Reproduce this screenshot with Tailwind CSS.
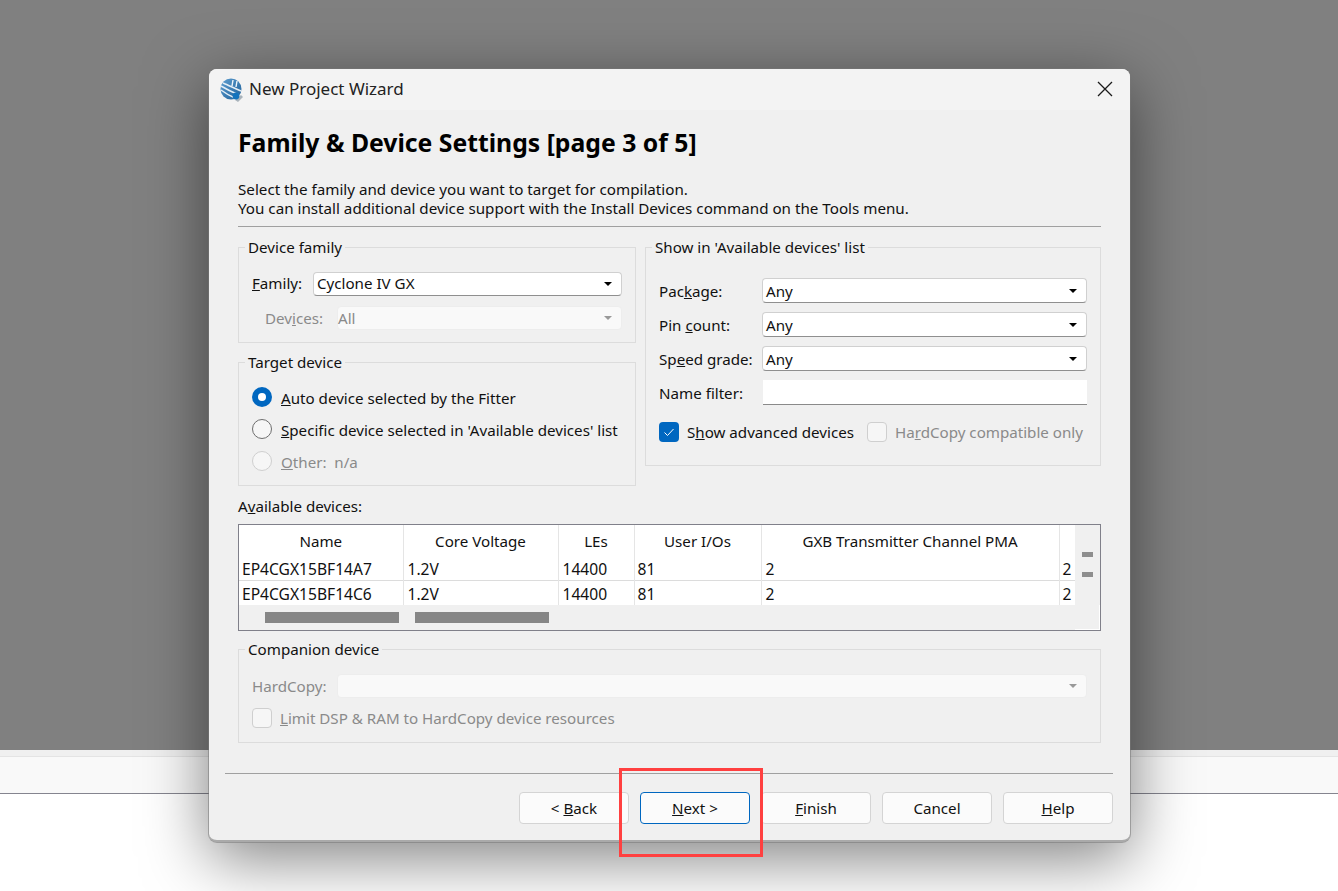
<!DOCTYPE html>
<html lang="en">
<head>
  <meta charset="UTF-8" />
  <title>New Project Wizard</title>
  <script src="https://cdn.jsdelivr.net/npm/@tailwindcss/browser@4"></script>
</head>
<body class="relative w-[1338px] h-[891px] overflow-hidden bg-white font-['Noto_Sans',sans-serif] text-[15.15px] leading-[20px] text-[#111]">

  <!-- dimmed main window behind the dialog -->
  <div class="h-[750px] bg-[#808080]"></div>
  <div class="h-[7px] bg-[#f0f0f0] border-b border-[#e4e4e4]"></div>
  <div class="h-[37px] bg-[#f9f9f9] border-b border-[#85858f]"></div>

  <!-- dialog -->
  <div class="absolute left-[209px] top-[69px] w-[921px] h-[773px] rounded-[8px] bg-[#f0f0f0] border-b-2 border-[#aaaaaa] shadow-[0_0_0_1px_rgba(120,120,120,0.55),0_16px_64px_rgba(0,0,0,0.5)]">

    <!-- title bar -->
    <div class="h-[41px] flex items-center pl-[11px] pr-[17px] rounded-t-[8px] bg-[#f3f3f3]">
      <svg class="w-[23px] h-[24px] mr-[6px]" viewBox="0 0 23 24">
        <defs>
          <linearGradient id="globe" x1="0" y1="0" x2="1" y2="1">
            <stop offset="0" stop-color="#5f9fd0" />
            <stop offset="1" stop-color="#1d5f99" />
          </linearGradient>
        </defs>
        <circle cx="11" cy="11" r="10.5" fill="url(#globe)" />
        <path d="M1 8 C6 11 12 14 19 17 M1 12 C5 15 10 18 15 20 M3 5 C8 7 14 10 21 13" stroke="#e4eef6" stroke-width="1.5" fill="none" />
        <path d="M13 2 L12 8 M17 3 L16 9" stroke="#eef5fa" stroke-width="1.4" />
        <path d="M15 22 L21 17 L23 19 L18 24 Z" fill="#a9b3bb" />
        <circle cx="16" cy="18" r="3.4" fill="#1273bd" />
      </svg>
      <span class="pb-[2px] text-[17px] text-[#222]">New Project Wizard</span>
      <svg class="ml-auto mb-[2px] w-[16px] h-[16px]" viewBox="0 0 16 16">
        <path d="M1 1 L15 15 M15 1 L1 15" stroke="#1a1a1a" stroke-width="1.3" fill="none" />
      </svg>
    </div>

    <div class="px-[29px]">
      <h1 class="mt-[17px] text-[24.75px] leading-[32px] font-bold text-black">Family &amp; Device Settings [page 3 of 5]</h1>
      <p class="mt-[21px] text-[15.2px] leading-[19px]">Select the family and device you want to target for compilation.<br />You can install additional device support with the Install Devices command on the Tools menu.</p>
      <div class="mt-[8px] h-px bg-[#a0a0a0]"></div>

      <div class="mt-[10px] flex gap-[9px] items-start">
        <!-- left column -->
        <div class="w-[398px]">
          <fieldset class="border border-[#dcdcdc] px-[13px] pt-[15px] pb-[12px]">
            <legend class="ml-[-7px] px-[3px]">Device family</legend>
            <div class="flex items-center h-[24px]">
              <span class="w-[61px] pb-[2px]"><span class="underline">F</span>amily:</span>
              <div class="flex-1 h-[24px] flex items-center pl-[3px] pr-[9px] rounded-[4px] bg-white border border-[#d0d0d0] border-b-[#8f8f8f]">
                <span class="pb-[2px]">Cyclone IV GX</span>
                <span class="ml-auto w-0 h-0 border-x-[4px] border-x-transparent border-t-[4px] border-t-black"></span>
              </div>
            </div>
            <div class="mt-[10px] flex items-center h-[24px] text-[#8a8a8a]">
              <span class="w-[85px] pl-[13px]">Dev<span class="underline">i</span>ces:</span>
              <div class="flex-1 h-[24px] flex items-center pr-[9px] rounded-[4px] bg-[#f9f9f9] border border-[#ededed]">
                <span>All</span>
                <span class="ml-auto w-0 h-0 border-x-[4px] border-x-transparent border-t-[4px] border-t-[#999]"></span>
              </div>
            </div>
          </fieldset>

          <fieldset class="mt-[9px] border border-[#dcdcdc] px-[13px] pt-[15px] pb-[14px]">
            <legend class="ml-[-7px] px-[3px]">Target device</legend>
            <div class="flex items-center h-[20px] gap-[9px]">
              <span class="w-[20px] h-[20px] rounded-full bg-[#0067c0] flex items-center justify-center"><span class="w-[8px] h-[8px] rounded-full bg-white"></span></span>
              <span class="pt-[2px]"><span class="underline">A</span>uto device selected by the Fitter</span>
            </div>
            <div class="mt-[12px] flex items-center h-[20px] gap-[9px]">
              <span class="w-[20px] h-[20px] rounded-full bg-[#f6f6f6] border border-[#6e6e6e]"></span>
              <span class="pt-[2px]"><span class="underline">S</span>pecific device selected in 'Available devices' list</span>
            </div>
            <div class="mt-[12px] flex items-center h-[20px] gap-[9px] text-[#8a8a8a]">
              <span class="w-[20px] h-[20px] rounded-full bg-[#f6f6f6] border border-[#cfcfcf]"></span>
              <span class="pt-[2px]"><span class="underline">O</span>ther:&nbsp; n/a</span>
            </div>
          </fieldset>
        </div>

        <!-- right column -->
        <fieldset class="w-[456px] border border-[#dcdcdc] pl-[13px] pr-[13px] pt-[21px] pb-[23px]">
          <legend class="ml-[-7px] px-[3px]">Show in 'Available devices' list</legend>
          <div class="flex items-center h-[25px]">
            <span class="w-[103px]">Pac<span class="underline">k</span>age:</span>
            <div class="flex-1 h-[25px] flex items-center pl-[3px] pr-[9px] rounded-[4px] bg-white border border-[#d0d0d0] border-b-[#8f8f8f]">
              <span>Any</span>
              <span class="ml-auto w-0 h-0 border-x-[4px] border-x-transparent border-t-[4px] border-t-black"></span>
            </div>
          </div>
          <div class="mt-[9px] flex items-center h-[25px]">
            <span class="w-[103px]">Pin <span class="underline">c</span>ount:</span>
            <div class="flex-1 h-[25px] flex items-center pl-[3px] pr-[9px] rounded-[4px] bg-white border border-[#d0d0d0] border-b-[#8f8f8f]">
              <span>Any</span>
              <span class="ml-auto w-0 h-0 border-x-[4px] border-x-transparent border-t-[4px] border-t-black"></span>
            </div>
          </div>
          <div class="mt-[9px] flex items-center h-[25px]">
            <span class="w-[103px]">Sp<span class="underline">e</span>ed grade:</span>
            <div class="flex-1 h-[25px] flex items-center pl-[3px] pr-[9px] rounded-[4px] bg-white border border-[#d0d0d0] border-b-[#8f8f8f]">
              <span>Any</span>
              <span class="ml-auto w-0 h-0 border-x-[4px] border-x-transparent border-t-[4px] border-t-black"></span>
            </div>
          </div>
          <div class="mt-[9px] flex items-center h-[25px]">
            <span class="w-[104px]">Name filter:</span>
            <div class="flex-1 h-[25px] bg-white border-b border-[#8a8a8a]"></div>
          </div>
          <div class="mt-[17px] flex items-center h-[20px]">
            <span class="w-[20px] h-[20px] rounded-[4px] bg-[#0067c0] flex items-center justify-center">
              <svg class="w-[12px] h-[12px]" viewBox="0 0 12 12"><path d="M1.5 6.5 L4.5 9.5 L10.5 3" stroke="#fff" stroke-width="1" fill="none" /></svg>
            </span>
            <span class="ml-[8px]">S<span class="underline">h</span>ow advanced devices</span>
            <span class="ml-[13px] w-[20px] h-[20px] rounded-[4px] bg-[#f6f6f6] border border-[#cfcfcf]"></span>
            <span class="ml-[8px] text-[#8a8a8a]">Ha<span class="underline">r</span>dCopy compatible only</span>
          </div>
        </fieldset>
      </div>

      <div class="mt-[10px]">A<span class="underline">v</span>ailable devices:</div>

      <!-- device table -->
      <div class="mt-[8px] h-[107px] flex border border-[#80808a] bg-[#f0f0f0]">
        <div class="w-[836px]">
          <table class="w-[836px] table-fixed bg-white">
            <colgroup>
              <col class="w-[164px]" /><col class="w-[155px]" /><col class="w-[76px]" /><col class="w-[127px]" /><col class="w-[298px]" /><col class="w-[16px]" />
            </colgroup>
            <thead>
              <tr class="h-[32px] text-center">
                <th class="font-normal border-r border-[#e5e5e5]">Name</th>
                <th class="font-normal border-r border-[#e5e5e5]">Core Voltage</th>
                <th class="font-normal border-r border-[#e5e5e5]">LEs</th>
                <th class="font-normal border-r border-[#e5e5e5]">User I/Os</th>
                <th class="font-normal border-r border-[#e5e5e5]">GXB Transmitter Channel PMA</th>
                <th class="font-normal"></th>
              </tr>
            </thead>
            <tbody class="text-[15.6px]">
              <tr class="h-[23px] border-b border-[#dcdcdc]">
                <td class="pl-[3px] pt-[2px] border-r border-[#e5e5e5] whitespace-nowrap overflow-hidden">EP4CGX15BF14A7</td>
                <td class="pl-[4px] pt-[2px] border-r border-[#e5e5e5]">1.2V</td>
                <td class="pl-[4px] pt-[2px] border-r border-[#e5e5e5]">14400</td>
                <td class="pl-[3px] pt-[2px] border-r border-[#e5e5e5]">81</td>
                <td class="pl-[4px] pt-[2px] border-r border-[#e5e5e5]">2</td>
                <td class="pl-[3px] pt-[2px] overflow-hidden">2</td>
              </tr>
              <tr class="h-[25px]">
                <td class="pl-[3px] pt-[2px] border-r border-[#e5e5e5] whitespace-nowrap overflow-hidden">EP4CGX15BF14C6</td>
                <td class="pl-[4px] pt-[2px] border-r border-[#e5e5e5]">1.2V</td>
                <td class="pl-[4px] pt-[2px] border-r border-[#e5e5e5]">14400</td>
                <td class="pl-[3px] pt-[2px] border-r border-[#e5e5e5]">81</td>
                <td class="pl-[4px] pt-[2px] border-r border-[#e5e5e5]">2</td>
                <td class="pl-[3px] pt-[2px] overflow-hidden">2</td>
              </tr>
            </tbody>
          </table>
          <div class="mt-[7px] pl-[26px] flex gap-[16px]">
            <div class="w-[134px] h-[11px] bg-[#868686]"></div>
            <div class="w-[134px] h-[11px] bg-[#868686]"></div>
          </div>
        </div>
        <div class="flex-1 flex flex-col">
          <div class="pt-[27px] pl-[7px]">
            <div class="w-[11px] h-[5px] bg-[#8e8e8e]"></div>
            <div class="mt-[15px] w-[11px] h-[5px] bg-[#8e8e8e]"></div>
          </div>
          <div class="mt-auto h-[25px] border-r border-b border-white"></div>
        </div>
      </div>

      <fieldset class="mt-[8px] border border-[#dcdcdc] px-[13px] pt-[15px] pb-[14px]">
        <legend class="ml-[-7px] px-[3px]">Companion device</legend>
        <div class="flex items-center h-[24px] text-[#8a8a8a]">
          <span class="w-[85px]">HardCopy:</span>
          <div class="flex-1 h-[24px] flex items-center pr-[9px] rounded-[4px] bg-[#f9f9f9] border border-[#ededed]">
            <span class="ml-auto w-0 h-0 border-x-[4px] border-x-transparent border-t-[4px] border-t-[#999]"></span>
          </div>
        </div>
        <div class="mt-[10px] flex items-center h-[20px] gap-[8px] text-[#8a8a8a]">
          <span class="w-[20px] h-[20px] rounded-[4px] bg-[#f6f6f6] border border-[#cfcfcf]"></span>
          <span><span class="underline">L</span>imit DSP &amp; RAM to HardCopy device resources</span>
        </div>
      </fieldset>

      <div class="mt-[30px] mr-[-12px] ml-[-13px] h-px bg-[#a0a0a0]"></div>

      <!-- wizard buttons -->
      <div class="mt-[18px] mr-[-12px] flex justify-end gap-[11px]">
        <button class="w-[110px] h-[32px] pb-[1px] rounded-[4px] bg-white/70 border border-[#d4d4d4]">&lt; <span class="underline">B</span>ack</button>
        <button class="w-[110px] h-[32px] pb-[1px] rounded-[4px] bg-white/70 border border-[#0067c0]"><span class="underline">N</span>ext &gt;</button>
        <button class="w-[110px] h-[32px] pb-[1px] rounded-[4px] bg-white/70 border border-[#d4d4d4]"><span class="underline">F</span>inish</button>
        <button class="w-[110px] h-[32px] pb-[1px] rounded-[4px] bg-white/70 border border-[#d4d4d4]">Cancel</button>
        <button class="w-[110px] h-[32px] pb-[1px] rounded-[4px] bg-white/70 border border-[#d4d4d4]"><span class="underline">H</span>elp</button>
      </div>
    </div>
  </div>

  <!-- red annotation box -->
  <div class="absolute left-[619px] top-[768px] w-[144px] h-[89px] border-[3px] border-[#ff4040]"></div>
</body>
</html>
